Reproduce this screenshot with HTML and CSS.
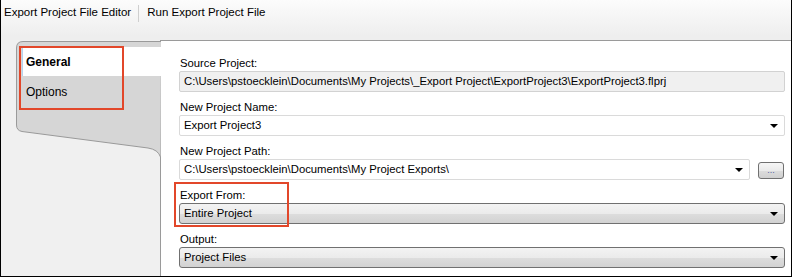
FILE: index.html
```html
<!DOCTYPE html>
<html lang="en">
<head>
  <meta charset="UTF-8">
  <title>Export Project File Editor</title>
  <link rel="stylesheet" href="styles.css">
</head>
<body>
  <div class="window">
    <!-- toolbar -->
    <div class="toolbar">
      <span class="toolbar__item">Export Project File Editor</span>
      <span class="toolbar__sep"></span>
      <span class="toolbar__item">Run Export Project File</span>
    </div>

    <div class="main">
      <!-- tabs -->
      <div class="sidebar">
        <div class="tabs">
          <svg class="tabs__bg" width="145" height="116" viewBox="0 0 145 116">
            <path d="M0.5 116 L0.5 86 Q0.5 90 6 90.5 L132 107 Q142 108.5 144.5 116 Z" fill="#f0f0f0"/>
            <path d="M145 0.5 L7 0.5 Q0.5 0.5 0.5 7 L0.5 84 Q0.5 89.5 6 90.5 L132 107 Q142 108.5 144.5 116" fill="#d6d6d6" stroke="#9a9a9a" stroke-width="1"/>
          </svg>
          <div class="tab tab--active">General</div>
          <div class="tab">Options</div>
          <div class="mark mark--tabs"></div>
        </div>
      </div>

      <!-- form -->
      <div class="panel">
        <div class="field">
          <div class="field__label">Source Project:</div>
          <div class="input input--readonly">C:\Users\pstoecklein\Documents\My Projects\_Export Project\ExportProject3\ExportProject3.flprj</div>
        </div>
        <div class="field">
          <div class="field__label">New Project Name:</div>
          <div class="input input--combo">Export Project3<span class="arrow"></span></div>
        </div>
        <div class="field">
          <div class="field__label">New Project Path:</div>
          <div class="field__row">
            <div class="input input--combo">C:\Users\pstoecklein\Documents\My Project Exports\<span class="arrow"></span></div>
            <div class="browse">...</div>
          </div>
        </div>
        <div class="field field--marked">
          <div class="field__label">Export From:</div>
          <div class="input input--select">Entire Project<span class="arrow"></span></div>
          <div class="mark mark--export"></div>
        </div>
        <div class="field">
          <div class="field__label">Output:</div>
          <div class="input input--select">Project Files<span class="arrow"></span></div>
        </div>
      </div>
    </div>
  </div>
</body>
</html>
```

FILE: styles.css
```css
* {
  box-sizing: border-box;
}
body {
  margin: 0;
  font-family: "Liberation Sans", Arial, sans-serif;
  font-size: 11.3px;
  color: #000;
}
.window {
  width: 792px;
  height: 277px;
  border: 1px solid #000;
  border-top: none;
  background: #f0f0f0;
  display: flex;
  flex-direction: column;
  overflow: hidden;
}

/* toolbar */
.toolbar {
  height: 40px;
  flex: none;
  display: flex;
  align-items: flex-start;
  padding: 4px 0 0 2px;
  background: linear-gradient(#fcfcfc, #f8f8f8 10px, #eeeeee 36px);
  font-size: 11.5px;
}
.toolbar__item {
  line-height: 17px;
  padding: 0 1px;
}
.toolbar__sep {
  width: 1px;
  height: 17px;
  margin: 1px 7px 0 6px;
  background: #cfcfcf;
}

.main {
  flex: 1;
  display: flex;
}

/* tabs */
.sidebar {
  width: 159px;
  flex: none;
  padding: 1px 0 0 15px;
}
.tabs {
  position: relative;
  width: 145px;
  height: 116px;
  margin-right: -1px;
  padding-top: 6px;
  z-index: 1;
}
.tabs__bg {
  position: absolute;
  left: 0;
  top: 0;
}
.tab {
  position: relative;
  height: 29px;
  margin-left: 6px;
  padding-left: 3px;
  line-height: 29px;
  font-size: 12px;
}
.tab--active {
  background: #fff;
  border-left: 1px solid #b4d3ee;
  font-weight: bold;
  line-height: 31px;
}
.tab + .tab {
  line-height: 32px;
  padding-left: 4px;
}

/* annotation frames */
.mark {
  position: absolute;
  border: 2px solid #e2472a;
  pointer-events: none;
}
.mark--tabs {
  left: 3px;
  top: 5px;
  width: 105px;
  height: 64px;
}
.mark--export {
  left: -5px;
  top: -6px;
  width: 115px;
  height: 45px;
}

/* form panel */
.panel {
  flex: 1;
  background: #fff;
  border-top: 1px solid #9a9a9a;
  border-left: 1px solid #9a9a9a;
  padding: 15px 6px 0 18px;
  display: flex;
  flex-direction: column;
  gap: 8px;
}
.field {
  display: flex;
  flex-direction: column;
}
.field--marked {
  position: relative;
}
.field__label {
  line-height: 14px;
  margin-bottom: 1px;
  padding-left: 1px;
}
.field__row {
  display: flex;
  align-items: center;
  gap: 8px;
}
.input {
  position: relative;
  height: 21px;
  line-height: 19px;
  padding-left: 4px;
  border: 1px solid #dadada;
  border-radius: 2px;
  background: #fff;
  white-space: nowrap;
}
.field__row .input {
  flex: 1;
}
.input--readonly {
  background: #f0f0f0;
  border-color: #d2d2d2;
}
.input--select {
  border-color: #707070;
  border-radius: 3px;
  background: linear-gradient(#f3f3f3, #ebebeb 50%, #dddddd 51%, #d2d2d2);
}
.arrow {
  position: absolute;
  right: 6px;
  top: 8px;
  width: 0;
  height: 0;
  border-left: 4px solid transparent;
  border-right: 4px solid transparent;
  border-top: 4px solid #000;
}
.browse {
  width: 26px;
  height: 17px;
  flex: none;
  border: 1px solid #707070;
  border-radius: 3px;
  background: linear-gradient(#f6f6f6, #eaeaea 50%, #dcdcdc 51%, #d0d0d0);
  text-align: center;
  line-height: 15px;
  font-size: 9px;
  color: #5060a0;
  margin-top: 2px;
  margin-right: 1px;
}
```
